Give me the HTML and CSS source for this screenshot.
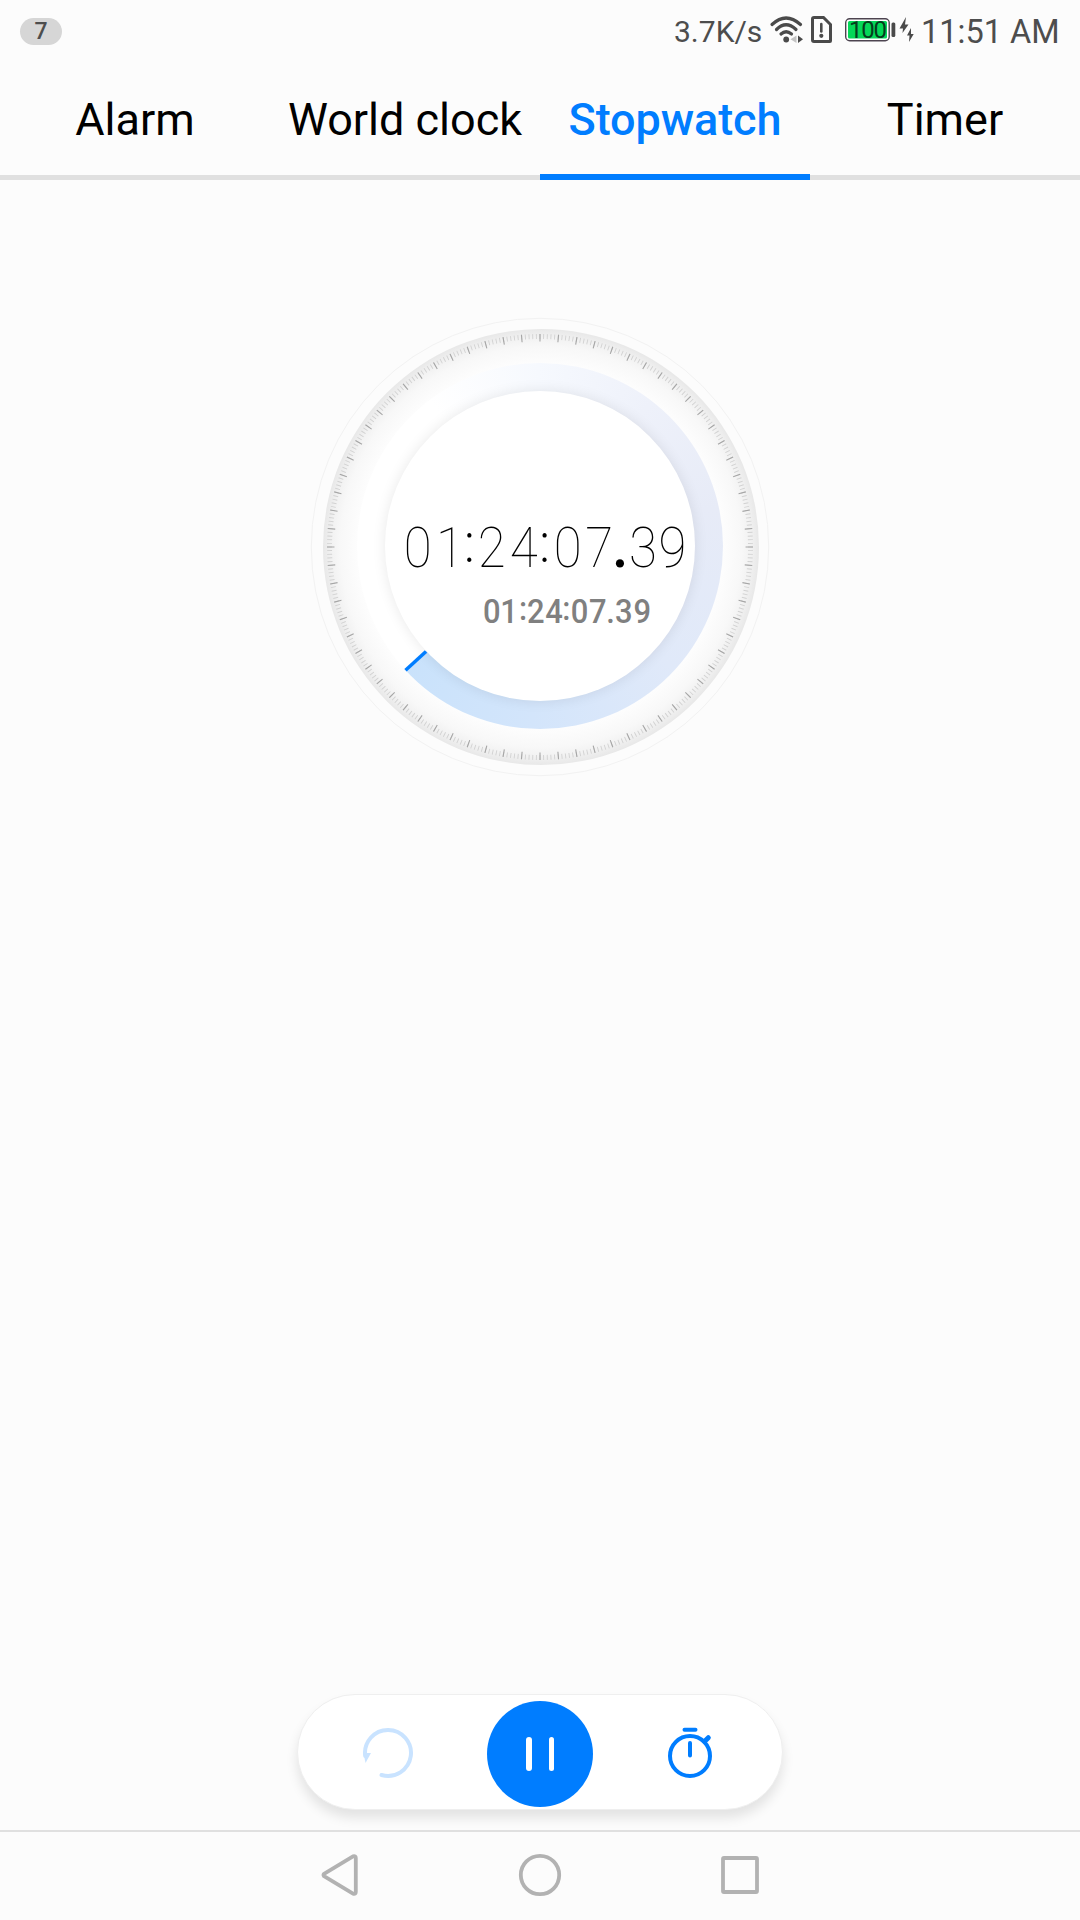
FILE: index.html
```html
<!DOCTYPE html>
<html lang="en">
<head>
<meta charset="utf-8">
<title>Clock</title>
<link rel="stylesheet" href="styles.css">
</head>
<body>
<div class="screen">
  <header class="status">
    <span class="badge">7</span>
    <span class="speed">3.7K/s</span>
    <svg class="status-icons" width="150" height="62" viewBox="766 0 150 62">
      <g fill="none" stroke="#4a4a4a" stroke-width="3.2" stroke-linecap="round">
        <path d="M772 24.500Q786 11.500 800.500 24.500"/>
        <path d="M776.500 29.500Q786 20 796 29.500"/>
        <path d="M781 34Q786 29.500 791.500 34"/>
      </g>
      <circle cx="786.200" cy="39.500" r="2.900" fill="#4a4a4a"/>
      <path d="M796.500 35.500v7.500l-6-3.700z" fill="#c4c4c4"/>
      <path d="M798 35.500v7.500l5-3.700z" fill="#4a4a4a"/>
      <path d="M814 17.500h9.500l7 7V41q0 .5-.5.500h-16q-1.500 0-1.500-1.500V19q0-1.500 1.500-1.500z" fill="none" stroke="#4a4a4a" stroke-width="3"/>
      <path d="M821.300 24v7.500" stroke="#4a4a4a" stroke-width="2.600" stroke-linecap="round"/>
      <circle cx="821.300" cy="35.800" r="2.100" fill="#4a4a4a"/>
      <rect x="845.700" y="18.700" width="43.500" height="22" rx="4" fill="#fff" stroke="#4d4450" stroke-width="1.400"/>
      <rect x="848" y="21" width="39" height="17.500" rx="1.500" fill="#04d858"/>
      <text class="battery-level" x="868" y="37.500" text-anchor="middle" textLength="38">100</text>
      <rect x="891.500" y="22.500" width="3.800" height="14.500" rx="1.500" fill="#4a4a4a"/>
      <path d="M906 17l-6.500 11.500h3.500l-.500 4.500 6-8.500h-3.500z M911 28l-4 7.500h2.500l-.500 6.500 4.700-8h-2.700z" fill="#4a4a4a"/>
    </svg>
    <span class="time">11:51 AM</span>
  </header>

  <nav class="tabs">
    <div class="tab"><span>Alarm</span></div>
    <div class="tab"><span>World clock</span></div>
    <div class="tab active"><span>Stopwatch</span></div>
    <div class="tab"><span>Timer</span></div>
  </nav>

  <main class="content">
    <div class="dial">
      <div class="face"></div>
      <div class="progress"></div>
      <div class="disc"></div>
      <svg class="marks" width="460" height="460" viewBox="-230 -230 460 460">
        <circle class="rim" r="228.700"/>
        <circle class="minor" r="210.500" pathLength="360"/>
        <circle class="major" r="209.300" pathLength="360"/>
        <path class="hand" d="M-114 104.500L-134.500 123.300"/>
        <text class="lap-main" transform="scale(.91 1)" y="19.500" x="-134.500 -99 -77.500 -53 -18 5 30.500 65 88 113 145.500">01<tspan class="colon" dy="-5">:</tspan><tspan dy="5">2</tspan>4<tspan class="colon" dy="-5">:</tspan><tspan dy="5">0</tspan>7<tspan class="point">.</tspan>39</text>
        <text class="lap-small" transform="scale(.91 1)" y="76" x="-53 -34 -18.500 -4.500 15.500 29 43.500 63.500 77.500 92 112.500">01<tspan dy="-3">:</tspan><tspan dy="3">2</tspan>4<tspan dy="-3">:</tspan><tspan dy="3">0</tspan>7.39</text>
      </svg>
    </div>

    <div class="controls">
      <svg width="54" height="54" viewBox="361 1726 54 54">
        <path d="M381.500 1775A23 23 0 1 0 365.200 1756" fill="none" stroke="#c9e3ff" stroke-width="4" stroke-linecap="round"/>
        <path d="M363.500 1753h7.500l-5.500 10z" fill="#c9e3ff"/>
      </svg>
      <div class="pause"><i></i><i></i></div>
      <svg width="54" height="54" viewBox="663 1726 54 54" fill="none" stroke="#007dff" stroke-width="4" stroke-linecap="round">
        <circle cx="690" cy="1756" r="20"/>
        <path d="M684.500 1729.800h11M690 1743v12.500"/>
        <path d="M704.500 1741.500l3.800-3.800" stroke-width="5"/>
      </svg>
    </div>
  </main>

  <footer class="navbar">
    <svg width="540" height="88" viewBox="270 1832 540 88" fill="none" stroke="#b2b2b2" stroke-width="3.800" stroke-linejoin="round">
      <path d="M324 1873.800Q323 1875 324 1876.200L353 1893.700Q355.800 1894.500 355.800 1892V1858Q355.800 1855.500 353 1856.300Z"/>
      <circle cx="540" cy="1875" r="19.200"/>
      <rect x="723" y="1858" width="34" height="34" rx="1"/>
    </svg>
  </footer>
</div>
</body>
</html>
```
FILE: styles.css
```css
* { box-sizing: border-box; }

body {
  margin: 0;
  font-family: Roboto, "Noto Sans", sans-serif;
  color: #000;
  background: #fcfcfc;
}

.screen {
  display: flex;
  flex-direction: column;
  width: 1080px;
  height: 1920px;
  overflow: hidden;
}

/* Status bar */
.status {
  display: flex;
  align-items: center;
  height: 62px;
  padding: 0 0 0 20px;
  color: #4d4d4d;
}

.status > * { flex: none; }

.badge {
  width: 42px;
  height: 27px;
  border-radius: 14px;
  background: #d6d6d6;
  font-size: 23px;
  font-weight: 500;
  line-height: 28px;
  text-align: center;
}

.speed {
  width: 92px;
  margin-left: 612px;
  font-size: 30px;
  white-space: nowrap;
}

.battery-level {
  font-size: 24px;
  fill: #053d1d;
}

.time {
  margin: 1px 0 0 5px;
  font-size: 32.500px;
  white-space: nowrap;
}

/* Tabs */
.tabs {
  display: grid;
  grid-template-columns: repeat(4, 270px);
  height: 118px;
  box-shadow: inset 0 -5px #e0e0e0;
}

.tab {
  display: flex;
  justify-content: center;
  padding-top: 31px;
  font-size: 45px;
  line-height: 54px;
  white-space: nowrap;
}

.tab.active {
  color: #007dff;
  font-weight: 500;
  letter-spacing: -0.1px;
  border-bottom: 6px solid #007dff;
}

/* Stopwatch */
.content {
  flex: 1;
  display: flex;
  flex-direction: column;
  align-items: center;
  justify-content: space-between;
  padding: 137px 0 20px;
}

.dial {
  display: grid;
  place-items: center;
  width: 460px;
  height: 460px;
}

.dial > * { grid-area: 1 / 1; }

.face {
  width: 436px;
  height: 436px;
  border-radius: 50%;
  background: radial-gradient(circle closest-side, #fff 78%, #fdfdfd 84%, #f8f8f8 92%, #f2f2f2 96%, #e8e8e8 100%);
}

.progress {
  width: 366px;
  height: 366px;
  margin: 0 1px 2px 0;
  border-radius: 50%;
  background: conic-gradient(from 227.600deg, #fff 0 95deg, #f6f9fe 132deg, #eef1fa 170deg, #e7ebf7 210deg, #e0e9f9 265deg, #d3e5fb 315deg, #c9e2fb 360deg);
}

.disc {
  width: 310px;
  height: 310px;
  margin: 0 2px 2px 0;
  border-radius: 50%;
  background: #fff;
  box-shadow: 0 0 14px rgba(0, 0, 0, 0.09);
}

.marks { margin-right: 1px; }
.marks circle { fill: none; }
.rim { stroke: #f2f2f2; stroke-width: 1; }
.minor { stroke: #d2d2d2; stroke-width: 5; stroke-dasharray: 0.25 0.75; stroke-dashoffset: 0.125; }
.major { stroke: #a6a6a6; stroke-width: 7.500; stroke-dasharray: 0.3 4.700; stroke-dashoffset: 0.150; }
.hand { stroke: #007dff; stroke-width: 3.500; }

.lap-main {
  font-size: 56px;
  font-weight: 100;
  text-anchor: middle;
}

.colon { font-weight: 300; }
.point { font-weight: 700; }

.lap-small {
  font-size: 34px;
  font-weight: 500;
  fill: #808080;
  text-anchor: middle;
}

/* Action pill */
.controls {
  display: flex;
  align-items: center;
  justify-content: space-between;
  width: 486px;
  height: 116px;
  padding: 4px 65px 0 63px;
  border: 1px solid #efefef;
  border-radius: 58px;
  background: #fff;
  box-shadow: 0 8px 12px rgba(0, 0, 0, 0.1);
}

.controls svg { margin-bottom: 2px; }

.pause {
  display: flex;
  align-items: center;
  justify-content: center;
  gap: 17px;
  width: 106px;
  height: 106px;
  margin-left: 2px;
  border-radius: 50%;
  background: #007dff;
}

.pause i {
  width: 5.500px;
  height: 34px;
  border-radius: 3px;
  background: #fff;
}

/* System navigation */
.navbar {
  display: flex;
  justify-content: center;
  height: 90px;
  border-top: 2px solid #e0e0e0;
}
```
